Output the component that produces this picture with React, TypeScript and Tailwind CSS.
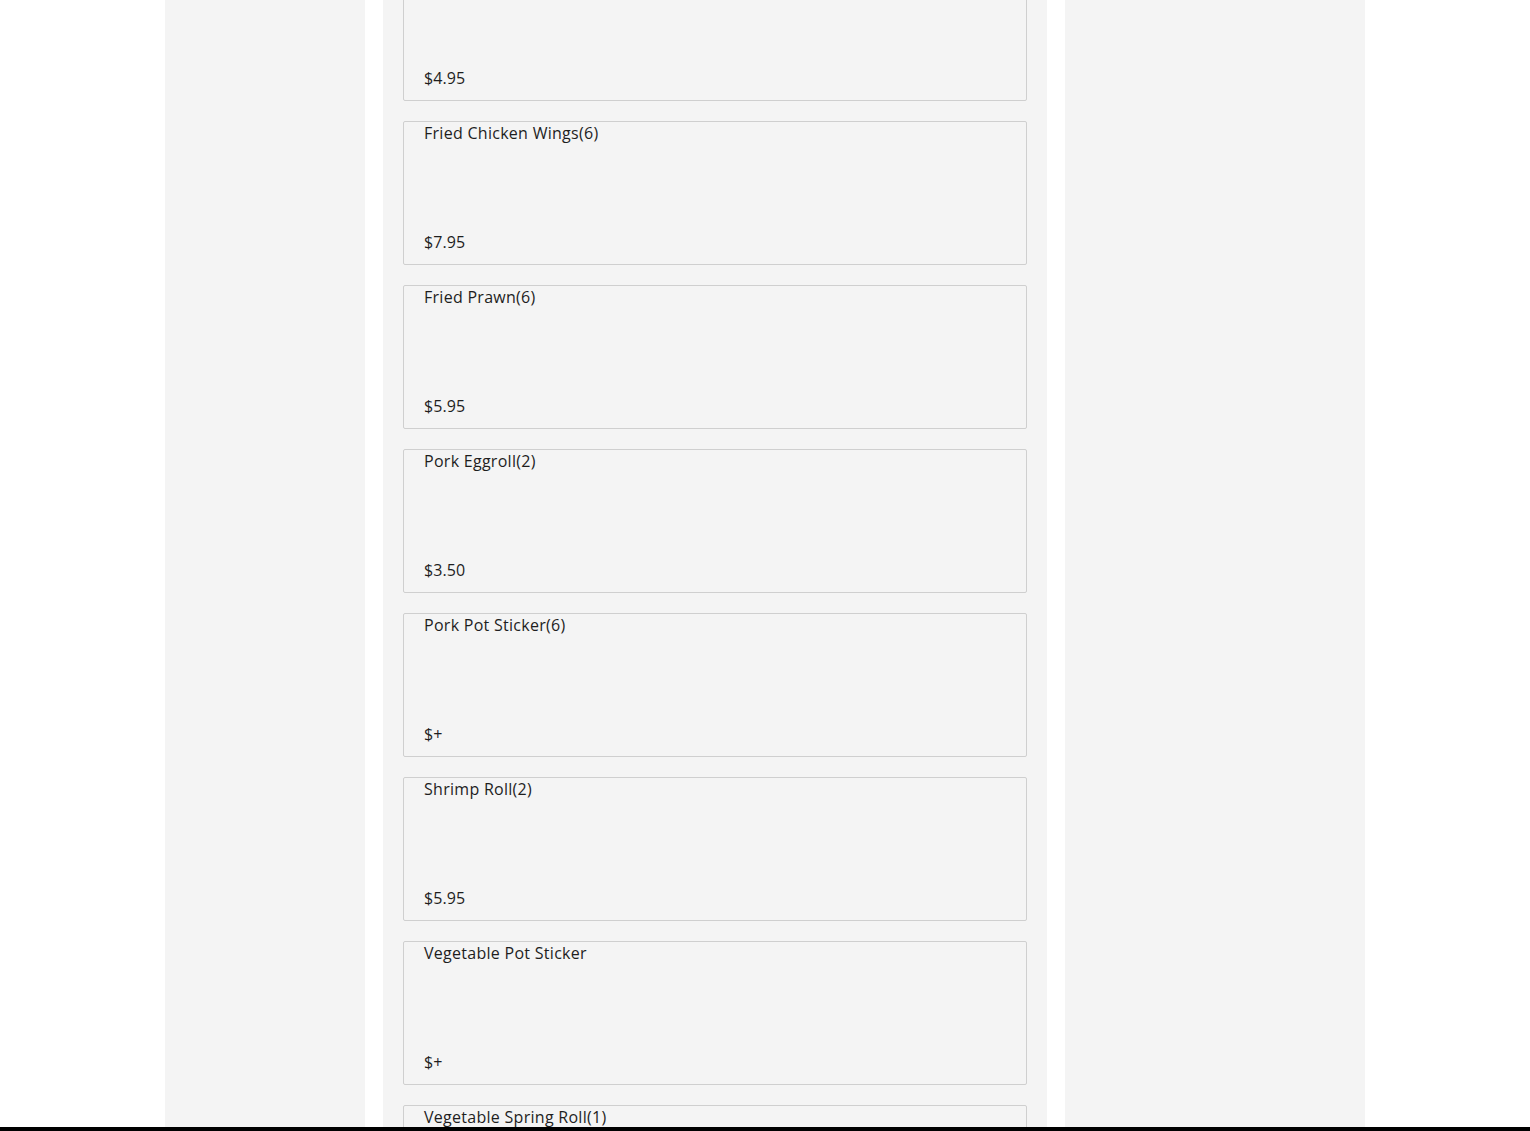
import React from "react";

const items: { name: string; price: string }[] = [
  { name: "Crab Rangoon(6)", price: "$4.95" },
  { name: "Fried Chicken Wings(6)", price: "$7.95" },
  { name: "Fried Prawn(6)", price: "$5.95" },
  { name: "Pork Eggroll(2)", price: "$3.50" },
  { name: "Pork Pot Sticker(6)", price: "$+" },
  { name: "Shrimp Roll(2)", price: "$5.95" },
  { name: "Vegetable Pot Sticker", price: "$+" },
  { name: "Vegetable Spring Roll(1)", price: "$3.95" },
];

export default function App() {
  return (
    <div
      className="h-[1131px] overflow-hidden bg-white text-[#1e1e1e]"
      style={{ fontFamily: '"Open Sans", "Liberation Sans", sans-serif' }}
    >
      <div className="mx-auto flex h-full w-[1200px] gap-[18px]">
        <aside className="w-[200px] shrink-0 bg-[#f4f4f4]" />
        <main className="w-[664px] shrink-0 bg-[#f4f4f4] px-5">
          <div className="-mt-[43px] flex flex-col gap-5">
            {items.map((it) => (
              <div
                key={it.name}
                className="flex h-[144px] flex-col justify-between rounded-[2px] border border-[#cfcfcf] bg-[#f4f4f4] px-5 pt-px pb-[12px]"
              >
                <div className="text-[16px] font-medium leading-5 tracking-[0.28px]">{it.name}</div>
                <div className="text-[16px] font-medium leading-5 tracking-[0.1px]">{it.price}</div>
              </div>
            ))}
          </div>
        </main>
        <aside className="w-[300px] shrink-0 bg-[#f4f4f4]" />
      </div>
      <div className="fixed bottom-0 left-0 right-0 h-[4px] bg-black" />
    </div>
  );
}
